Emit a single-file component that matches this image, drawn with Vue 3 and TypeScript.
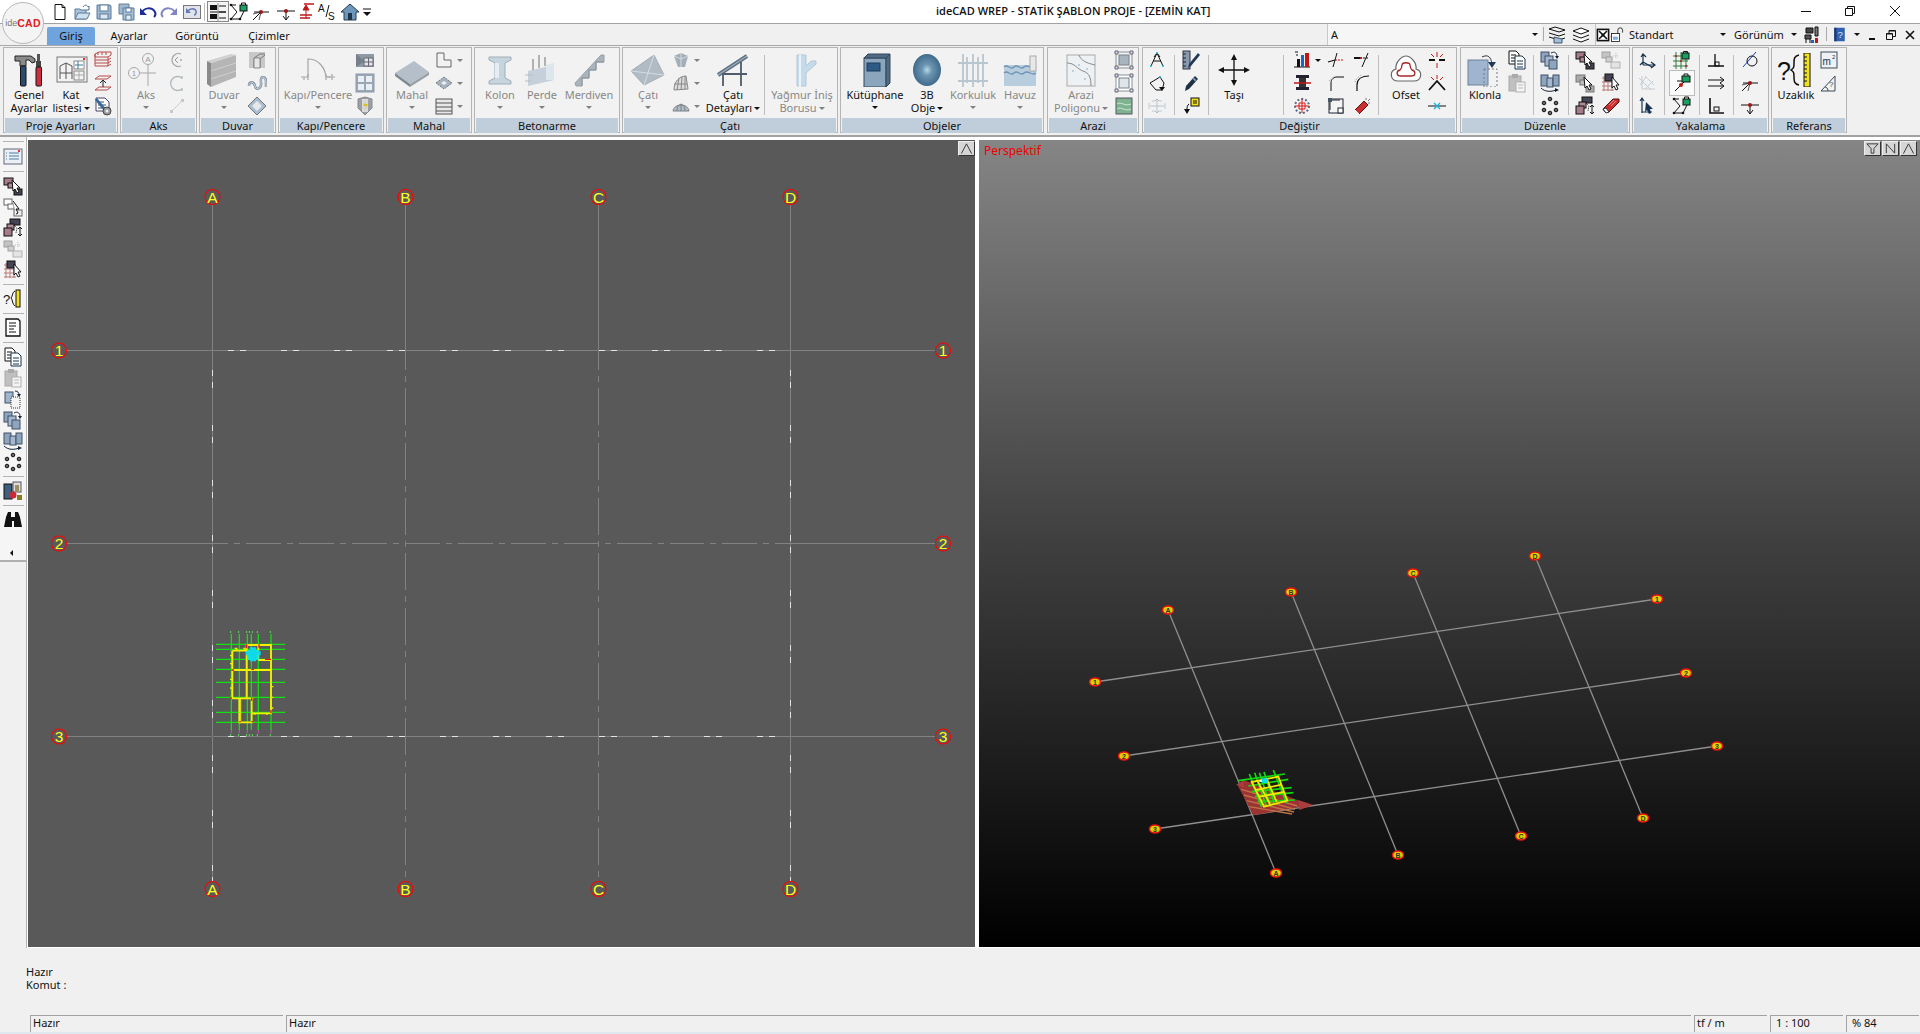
<template>
  <div class="app">
    <header class="titlebar">
      <div class="logo"><span class="logo-ide">ide</span><span class="logo-cad">CAD</span></div>
      <div class="quick">
        <span v-for="q in quickIcons" :key="q.n" class="quick-item" :class="{ boxed: q.boxed }" :style="{ left: q.x - 11 + 'px' }">
          <svg class="ico" viewBox="0 0 20 20" v-html="icons[q.n]"></svg>
        </span>
        <span class="quick-sep"></span>
      </div>
      <div class="title">ideCAD WREP - STATİK ŞABLON PROJE - [ZEMİN KAT]</div>
      <div class="win-buttons">
        <svg viewBox="0 0 12 12" class="win"><path d="M1 6.500h10" stroke="#111" fill="none" /></svg>
        <svg viewBox="0 0 12 12" class="win"><path d="M1.500 3.500h7v7h-7zM3.500 3.500v-2h7v7h-2" stroke="#111" fill="none" /></svg>
        <svg viewBox="0 0 12 12" class="win"><path d="M1 1l10 10M11 1L1 11" stroke="#111" fill="none" /></svg>
      </div>
    </header>

    <nav class="tabbar">
      <div class="tabs">
        <span class="tab active">Giriş</span>
        <span class="tab t-ayar">Ayarlar</span>
        <span class="tab t-gor">Görüntü</span>
        <span class="tab t-ciz">Çizimler</span>
      </div>
      <div class="combo combo-a"><span>A</span><i class="caret dark"></i></div>
      <div class="bar-sep"></div>
      <svg class="ico layer1" viewBox="0 0 20 20" v-html="icons.layerA"></svg>
      <svg class="ico layer2" viewBox="0 0 20 20" v-html="icons.layerB"></svg>
      <div class="bar-line"></div>
      <svg class="ico check" viewBox="0 0 20 20" v-html="icons.checkX"></svg>
      <svg class="ico lockw" viewBox="0 0 20 20" v-html="icons.lockWin"></svg>
      <div class="combo combo-std"><span>Standart</span><i class="caret dark"></i></div>
      <div class="combo-view"><span>Görünüm</span><i class="caret dark"></i></div>
      <svg class="ico person" viewBox="0 0 20 20" v-html="icons.person"></svg>
      <div class="bar-sep s2"></div>
      <svg class="ico helpb" viewBox="0 0 20 20" v-html="icons.helpBook"></svg>
      <i class="caret dark help-caret"></i>
      <div class="mdi">
        <svg viewBox="0 0 12 12" class="mdi-b"><path d="M3 10h6" stroke="#111" stroke-width="2" /></svg>
        <svg viewBox="0 0 12 12" class="mdi-b"><path d="M1.500 4.500h6v6h-6zM4 4.500v-3h6.500v6h-3M1.500 5h6M4 2h6.500" stroke="#111" fill="none" /></svg>
        <svg viewBox="0 0 12 12" class="mdi-b"><path d="M2 2l8 8M10 2l-8 8" stroke="#111" stroke-width="1.600" fill="none" /></svg>
      </div>
    </nav>

    <section class="ribbon">
      <div v-for="g in groups" :key="g.name" class="group" :style="{ width: g.x1 - g.x0 + 'px', marginLeft: g.gap + 'px' }">
        <div class="group-body">
          <template v-for="(c, i) in g.cols" :key="i">
            <div v-if="c.kind === 'sep'" class="col-sep" :style="{ marginLeft: c.ml + 'px' }"></div>
            <div v-else-if="c.kind === 'small'" class="col-small" :style="{ marginLeft: c.ml + 'px' }">
              <div v-for="(it, j) in c.items" :key="j" class="small-item" :class="{ boxed: it.boxed }">
                <svg v-if="it.n" class="ico" viewBox="0 0 20 20" v-html="icons[it.n]"></svg>
                <i v-if="it.caret" class="caret side" :class="{ dark: it.caret === 2 }"></i>
              </div>
            </div>
            <div v-else class="col-big" :class="{ dim: c.dim }" :style="{ width: c.w + 'px', marginLeft: c.ml + 'px' }">
              <svg class="ico-big" viewBox="0 0 36 34" v-html="icons[c.n]"></svg>
              <span v-for="(l, k) in c.label" :key="k" class="big-label">{{ l }}<i v-if="c.inline && k === c.label.length - 1" class="caret inline"></i></span>
              <i v-if="c.under" class="caret under"></i>
            </div>
          </template>
        </div>
        <div class="caption">{{ g.name }}</div>
      </div>
    </section>

    <main class="work">
      <aside class="sidebar">
        <div class="side-tools">
          <div class="side-sep first"></div>
          <template v-for="(s, i) in sideIcons" :key="i">
            <div v-if="s === '-'" class="side-sep"></div>
            <svg v-else class="ico side-ico" viewBox="0 0 20 20" v-html="icons[s]"></svg>
          </template>
          <i class="side-arrow"></i>
        </div>
      </aside>

      <div class="viewports">
        <div class="view plan">
          <svg class="canvas" viewBox="28 140 947 807">
            <g stroke="#828282" stroke-width="1" fill="none">
              <path v-for="x in planX" :key="x.t" :d="`M${x.x + 0.5} 205V881`" />
              <path v-for="y in planY" :key="y.t" :d="`M67 ${y.y + 0.5}H935`" />
            </g>
            <g>
              <rect v-for="(d, i) in hDashes" :key="'h' + i" :x="d.x" :y="d.y" width="6" height="1" :fill="d.c" />
              <rect v-for="(d, i) in vDashes" :key="'v' + i" :x="d.x" :y="d.y" width="1" height="6" :fill="d.c" />
            </g>
            <g v-for="m in planMarks" :key="m.k">
              <circle :cx="m.x" :cy="m.y" r="7.500" fill="#595959" stroke="#ff0000" stroke-width="1.100" />
              <text :x="m.x" :y="m.y + 5.500" class="axis-text">{{ m.t }}</text>
            </g>
            <g transform="translate(190 620) scale(.3333)">
              <g stroke="#12e012" stroke-width="3.800" fill="none">
                <path v-for="y in [73, 88, 118, 148, 187, 232, 277, 307]" :key="y" :d="`M78 ${y}H286`" />
                <path v-for="x in [124, 148, 172, 184, 205, 243]" :key="x" :d="`M${x} 42V330`" />
              </g>
              <g stroke="#5be05b" stroke-width="3" fill="none">
                <path v-for="x in [122, 146, 170, 178, 187, 202, 241]" :key="x" :d="`M${x} 33v6M${x} 342v6`" />
              </g>
              <path d="M124 330v10M148 330v10M172 330v10M205 330v10M243 330v10" stroke="#c050b0" stroke-width="3.500" fill="none" />
              <path d="M127 92H170M170 92V75H243V120H205M205 75V120M127 92V235H170M127 150H243M170 92V235M243 120V280H185M148 235V307H185V235M170 235H190" stroke="#f6f000" stroke-width="5.500" fill="none" />
              <path d="M152 235V304" stroke="#f6f000" stroke-width="3" fill="none" />
              <path d="M172 90h34v30h-34z" fill="#00e8e8" />
              <path d="M180 82h18v42h-18zM168 94h44v12h-44z" fill="#0fd8e8" />
              <path d="M170 73v12M207 73v10M124 150h8M243 118h-18M123 232v6M184 148h8M185 232v10M243 270v10M148 305h4M184 305h4" stroke="#e01010" stroke-width="4" fill="none" />
              <path d="M120 107h6M120 131h6M120 178h6M120 204h6M134 85h6v7M160 85h5v7M246 200h4M246 232h4M246 264h4M192 282h5M228 282h5" stroke="#f6f000" stroke-width="4" fill="none" />
              <rect x="63" y="345" width="8" height="8" fill="#6a6a80" />
            </g>
          </svg>
          <button class="vbtn one"><svg viewBox="0 0 16 14"><path d="M8 2L2.500 12.500M8 2l5.500 10.500" stroke="#333" fill="none" /></svg></button>
        </div>

        <div class="view persp">
          <svg class="canvas" viewBox="979 140 941 807">
            <g stroke="#8f8f8f" stroke-width="1.300" fill="none">
              <path v-for="l in perspLines" :key="l.a" :d="`M${l.x1} ${l.y1}L${l.x2} ${l.y2}`" />
            </g>
            <g transform="translate(1220 750) scale(.3333)">
              <path d="M52 104L70 90L232 150L272 165L100 196Z" fill="#9c3434" />
              <path d="M48 104L70 94L72 112ZM235 150L280 165L238 180Z" fill="#ac3c3c" />
              <path d="M64 118L232 168M72 135L225 178M80 152L222 186M88 170L216 192" stroke="#c07048" stroke-width="4" fill="none" />
              <g stroke="#12d812" stroke-width="5" fill="none">
                <path d="M55 92L195 72M85 108L205 88M95 125L215 113M105 140L220 128M112 155L225 150" />
                <path d="M88 72L125 172M104 68L140 170M118 68L152 168M132 66L165 165M160 60L200 160" />
              </g>
              <path d="M95 96L175 80L202 152L132 170ZM112 92L150 162M140 86L170 156M108 120L185 104M118 140L192 126" stroke="#f2e800" stroke-width="5.500" fill="none" />
              <path d="M125 85h18v14h-18z" fill="#00e0e8" />
              <path d="M118 90h8v6h-8z" fill="#d8f0f0" />
            </g>
            <g v-for="m in perspMarks" :key="m.k">
              <ellipse :cx="m.x" :cy="m.y" rx="5.500" ry="4" fill="#e0d000" stroke="#e81010" stroke-width="1.500" />
              <text :x="m.x" :y="m.y + 2.500" class="mini-text">{{ m.t }}</text>
            </g>
          </svg>
          <span class="persp-label">Perspektif</span>
          <div class="vbtn-row">
            <button class="vbtn"><svg viewBox="0 0 16 14"><path d="M2 2h12L9.500 7v5h-3V7z" stroke="#333" fill="none" /></svg></button>
            <button class="vbtn"><svg viewBox="0 0 16 14"><path d="M3.500 12V2L12.500 12V2" stroke="#333" fill="none" /></svg></button>
            <button class="vbtn"><svg viewBox="0 0 16 14"><path d="M8 2L2.500 12.500M8 2l5.500 10.500" stroke="#333" fill="none" /></svg></button>
          </div>
        </div>
      </div>
    </main>

    <section class="messages">
      <div>Hazır</div>
      <div>Komut :</div>
    </section>

    <footer class="status">
      <div class="cell c1">Hazır</div>
      <div class="cell c2">Hazır</div>
      <div class="cell c3">tf / m</div>
      <div class="cell c4">1 : 100</div>
      <div class="cell c5">% 84</div>
    </footer>
  </div>
</template>

<script setup lang="ts">
interface Item {
  n?: string
  caret?: number
  boxed?: boolean
}
interface Col {
  kind: 'big' | 'small' | 'sep'
  c: number
  n?: string
  label?: string[]
  dim?: boolean
  under?: boolean
  inline?: boolean
  w?: number
  ml?: number
  items?: Item[]
}

const big = (c: number, n: string, label: string[], opts: Partial<Col> = {}): Col => ({ kind: 'big', c, n, label, ...opts })
const small = (c: number, ...names: (string | Item)[]): Col => ({
  kind: 'small',
  c,
  items: names.map((x) => (typeof x === 'string' ? { n: x } : x)),
})
const sep = (c: number): Col => ({ kind: 'sep', c })

const raw = [
  { name: 'Proje Ayarları', x0: 3, x1: 118, cols: [
    big(29, 'hammer', ['Genel', 'Ayarlar']),
    big(71, 'kat', ['Kat', 'listesi'], { inline: true }),
    small(103, 'redStack', 'redPlanes', 'docGear'),
  ] },
  { name: 'Aks', x0: 120, x1: 197, cols: [
    big(146, 'aks', ['Aks'], { dim: true, under: true }),
    small(177, 'dimCircle', 'dimArc', 'dimLine'),
  ] },
  { name: 'Duvar', x0: 199, x1: 276, cols: [
    big(224, 'duvar', ['Duvar'], { dim: true, under: true }),
    small(257, 'wallCorner', 'wave', 'diamond'),
  ] },
  { name: 'Kapı/Pencere', x0: 278, x1: 384, cols: [
    big(318, 'kapi', ['Kapı/Pencere'], { dim: true, under: true, w: 72 }),
    small(365, 'winDark', 'winGrid', 'shield'),
  ] },
  { name: 'Mahal', x0: 386, x1: 472, cols: [
    big(412, 'mahal', ['Mahal'], { dim: true, under: true }),
    small(444, { n: 'lShape', caret: 1 }, { n: 'smallDiamond', caret: 1 }, { n: 'hatchBox', caret: 1 }),
  ] },
  { name: 'Betonarme', x0: 474, x1: 620, cols: [
    big(500, 'kolon', ['Kolon'], { dim: true, under: true }),
    big(542, 'perde', ['Perde'], { dim: true, under: true }),
    big(589, 'merdiven', ['Merdiven'], { dim: true, under: true }),
  ] },
  { name: 'Çatı', x0: 622, x1: 838, cols: [
    big(648, 'cati', ['Çatı'], { dim: true, under: true }),
    small(681, { n: 'roofCone', caret: 1 }, { n: 'roofHatch', caret: 1 }, { n: 'dome', caret: 1 }),
    big(733, 'catiDetay', ['Çatı', 'Detayları'], { inline: true, w: 60 }),
    sep(764),
    big(802, 'yagmur', ['Yağmur İniş', 'Borusu'], { dim: true, inline: true, w: 66 }),
  ] },
  { name: 'Objeler', x0: 840, x1: 1044, cols: [
    big(875, 'kutuphane', ['Kütüphane'], { under: true, w: 60 }),
    big(927, 'sphere', ['3B', 'Obje'], { inline: true }),
    big(973, 'korkuluk', ['Korkuluk'], { dim: true, under: true }),
    big(1020, 'havuz', ['Havuz'], { dim: true, under: true }),
  ] },
  { name: 'Arazi', x0: 1047, x1: 1139, cols: [
    big(1081, 'arazi', ['Arazi', 'Poligonu'], { dim: true, inline: true, w: 60 }),
    small(1124, 'boxA', 'boxB', 'boxC'),
  ] },
  { name: 'Değiştir', x0: 1142, x1: 1457, cols: [
    small(1157, 'triDots', 'loopArrow', 'dimMove'),
    sep(1174),
    small(1191, 'rulerPen', 'pen', 'arrowNote'),
    sep(1208),
    big(1234, 'tasi', ['Taşı']),
    sep(1283),
    small(1302, { n: 'bars', caret: 2 }, 'beam', 'target'),
    small(1336, 'lineRed', 'cornerDash', 'boxNodes'),
    small(1362, 'lineSlash', 'curveCorner', 'brush'),
    sep(1378),
    big(1406, 'ofset', ['Ofset']),
    small(1437, 'redCross', 'xCross', 'cyanCross'),
  ] },
  { name: 'Düzenle', x0: 1460, x1: 1630, cols: [
    big(1485, 'klonla', ['Klonla']),
    small(1517, 'copy', 'pasteDim', {}),
    sep(1533),
    small(1550, 'stackArrow', 'rectsArrow', 'dotRing'),
    sep(1568),
    small(1585, 'pinkCursor', 'grayCursor', 'rotateStack'),
    small(1611, 'dimRects', 'gridCursor', 'eraser'),
  ] },
  { name: 'Yakalama', x0: 1632, x1: 1769, cols: [
    small(1647, 'cornerArrow', 'dimGrid', 'cursorArrow'),
    sep(1664),
    small(1682, 'gridLock', { n: 'pointLock', boxed: true }, 'zigLock'),
    sep(1699),
    small(1716, 'perp', 'parallel', 'lCorner'),
    sep(1733),
    small(1750, 'lineCircle', 'dotLine', 'dotCross'),
  ] },
  { name: 'Referans', x0: 1771, x1: 1847, cols: [
    big(1796, 'uzaklik', ['Uzaklık']),
    small(1829, 'm2', 'angle', {}),
  ] },
]

const groups = raw.map((g, gi) => {
  let cur = g.x0
  const cols = g.cols.map((c) => {
    const w = c.kind === 'sep' ? 1 : c.kind === 'small' ? 20 : c.w ?? 46
    const ml = c.c - w / 2 - cur
    cur = c.c + w / 2
    return { ...c, w, ml }
  })
  return { ...g, cols, gap: gi === 0 ? g.x0 : g.x0 - raw[gi - 1].x1 }
})

const quickIcons = [
  { n: 'qNew', x: 60 }, { n: 'qOpen', x: 82 }, { n: 'qSave', x: 104 }, { n: 'qSaveAll', x: 127 },
  { n: 'qUndo', x: 148 }, { n: 'qRedo', x: 169 }, { n: 'qUndoBox', x: 192 },
  { n: 'qList', x: 218, boxed: true }, { n: 'zigLock', x: 239 }, { n: 'dotLine', x: 261 }, { n: 'dotCross', x: 286 },
  { n: 'qRedUp', x: 307 }, { n: 'qAs', x: 327 }, { n: 'qHome', x: 350 }, { n: 'qMore', x: 367 },
]

const sideIcons = [
  'qPanel', '-', 'pinkCursor', 'grayOutline', 'rotateStack', 'dimRects', 'gridCursor', '-',
  'sideUzak', '-', 'sideDoc', '-', 'copy', 'pasteDim', 'sideClone', 'stackArrow', 'rectsArrow', 'dotRing', '-',
  'sideObj', '-', 'binoc',
]

// kat plani: aks cizgileri ve kesikli parcalar
const planX = [{ t: 'A', x: 212 }, { t: 'B', x: 405 }, { t: 'C', x: 598 }, { t: 'D', x: 790 }]
const planY = [{ t: '1', y: 350 }, { t: '2', y: 543 }, { t: '3', y: 736 }]
const white = '#e4e4e4'
const bg = '#595959'

const hDashes: { x: number; y: number; c: string }[] = []
for (const [y, c] of [[350, white], [543, bg], [736, white]] as [number, string][]) {
  for (let i = -3; i <= 7; i++) {
    const x = Math.round(387 + i * 52.9)
    hDashes.push({ x, y, c }, { x: x + 12, y, c })
  }
}
const vDashes: { x: number; y: number; c: string }[] = []
for (const [x, c] of [[212, white], [405, bg], [598, bg], [790, white]] as [number, string][]) {
  for (let i = 0; i <= 9; i++) {
    const y = 370 + i * 55
    vDashes.push({ x, y, c }, { x, y: y + 12, c })
  }
}

const planMarks = [
  ...planX.flatMap((a) => [{ k: a.t + 't', t: a.t, x: a.x + 0.5, y: 197 }, { k: a.t + 'b', t: a.t, x: a.x + 0.5, y: 889 }]),
  ...planY.flatMap((a) => [{ k: a.t + 'l', t: a.t, x: 59, y: a.y + 0.5 }, { k: a.t + 'r', t: a.t, x: 943, y: a.y + 0.5 }]),
]

const perspLines = [
  { a: 'A', t: [1168, 610], b: [1276, 873] },
  { a: 'B', t: [1291, 592], b: [1398, 855] },
  { a: 'C', t: [1413, 573], b: [1521, 836] },
  { a: '4', t: [1535, 556], b: [1643, 818] },
  { a: '1', t: [1095, 682], b: [1657, 599] },
  { a: '2', t: [1124, 756], b: [1686, 673] },
  { a: '3', t: [1155, 829], b: [1717, 746] },
].map((l) => ({ a: l.a, x1: l.t[0], y1: l.t[1], x2: l.b[0], y2: l.b[1] }))

const perspMarks = [
  { k: 'at', t: 'A', x: 1168, y: 610 }, { k: 'ab', t: 'A', x: 1276, y: 873 },
  { k: 'bt', t: 'B', x: 1291, y: 592 }, { k: 'bb', t: 'B', x: 1398, y: 855 },
  { k: 'ct', t: 'C', x: 1413, y: 573 }, { k: 'cb', t: 'C', x: 1521, y: 836 },
  { k: 'dt', t: 'D', x: 1535, y: 556 }, { k: 'db', t: 'D', x: 1643, y: 818 },
  { k: '1l', t: '1', x: 1095, y: 682 }, { k: '1r', t: '1', x: 1657, y: 599 },
  { k: '2l', t: '2', x: 1124, y: 756 }, { k: '2r', t: '2', x: 1686, y: 673 },
  { k: '3l', t: '3', x: 1155, y: 829 }, { k: '3r', t: '3', x: 1717, y: 746 },
]

const K = 'stroke="#111" fill="none"'
const icons: Record<string, string> = {
  // quick access
  qNew: `<path d="M5 2.500h7l3 3v12H5z" fill="#fff" stroke="#111"/><path d="M12 2.500v3h3" ${K}/>`,
  qOpen: `<path d="M3 17V7h5l1 1h5v9z" fill="#a9c3da" stroke="#5a7a99"/><path d="M3 17l3-6h12l-3 6z" fill="#cfe0ee" stroke="#5a7a99"/><path d="M11 5c2-3 4-2 5 0l1-1v4h-3" fill="none" stroke="#4a6f95"/>`,
  qSave: `<path d="M3 3h13l1 1v13H3z" fill="#9db8d0" stroke="#5d7d9c"/><rect x="6" y="3" width="8" height="6" fill="#fff" stroke="#5d7d9c"/><rect x="6" y="12" width="8" height="5" fill="#dfe8f0" stroke="#5d7d9c"/>`,
  qSaveAll: `<path d="M2 2h10v10H2z" fill="#9db8d0" stroke="#6a7f95"/><path d="M6 6h11v12H6z" fill="#a8bfd3" stroke="#5d7d9c"/><rect x="9" y="6" width="5" height="4" fill="#fff" stroke="#5d7d9c"/><rect x="9" y="13" width="5" height="5" fill="#e6edf3" stroke="#5d7d9c"/>`,
  qUndo: `<path d="M4 11c2-6 10-6 13-1 1 2 0 4-1 5" fill="none" stroke="#1a2f9c" stroke-width="2"/><path d="M2 6v7h7z" fill="#1a2f9c"/>`,
  qRedo: `<path d="M16 11c-2-6-10-6-13-1-1 2 0 4 1 5" fill="none" stroke="#7f86c0" stroke-width="2"/><path d="M18 6v7h-7z" fill="#7f86c0"/>`,
  qUndoBox: `<rect x="1.500" y="3.500" width="17" height="13" fill="#dfe4ea" stroke="#777"/><path d="M6 9c2-3 7-3 8 0 1 2-1 4-2 4" fill="none" stroke="#6678b0" stroke-width="1.500"/><path d="M4 6v5h5z" fill="#6678b0"/>`,
  qList: `<rect x="2" y="3" width="7" height="5" fill="#111"/><rect x="2" y="12" width="7" height="5" fill="#111"/><path d="M11 4h7M11 10h7M11 16h7M2 10h16" stroke="#111"/><path d="M10 1v18" stroke="#888"/>`,
  qRedUp: `<path d="M9 17V5M9 3L6 8h6z" fill="#c01818" stroke="#c01818"/><path d="M3 13h12M3 16h10M7 2h10" stroke="#c01818" fill="none" stroke-width="1.500"/>`,
  qAs: `<text x="1" y="10" font-size="10" font-family="Liberation Sans" fill="#111">A</text><path d="M9 15l3-12" stroke="#111"/><text x="11" y="18" font-size="10" font-family="Liberation Sans" fill="#111">S</text>`,
  qHome: `<path d="M10 2L1 10h3v8h12v-8h3z" fill="#6d96bd" stroke="#24384d"/><rect x="8" y="11" width="4" height="7" fill="#1f3347"/>`,
  qMore: `<path d="M6 7h8" stroke="#111"/><path d="M6 10h8l-4 4z" fill="#111"/>`,
  // tab bar
  layerA: `<path d="M2 4l6-2 10 3-6 2zM2 8l10 3 6-2M2 12l10 3 6-2" fill="none" stroke="#111"/><path d="M7 12l8 2v4H7z" fill="#9ec0de" stroke="#456"/>`,
  layerB: `<path d="M2 6l8-3 8 3-8 3zM2 10l8 3 8-3M2 14l8 3 8-3" fill="#fff" stroke="#111"/>`,
  checkX: `<rect x="3" y="3" width="14" height="14" fill="#fff" stroke="#111" stroke-width="2"/><path d="M5 5l10 10M15 5L5 15" stroke="#111" stroke-width="2"/><circle cx="10" cy="10" r="2" fill="#111"/>`,
  lockWin: `<rect x="3" y="8" width="10" height="10" fill="#fff" stroke="#111"/><path d="M5 12h6v4H5z" fill="#7fb0e0"/><path d="M11 8V4a3 3 0 016 0v3" fill="none" stroke="#111"/><path d="M2 12h2" stroke="#c22"/>`,
  person: `<path d="M4 3h7v5H4z" fill="#444" stroke="#111"/><path d="M13 2v9h3V2z" fill="#777" stroke="#111"/><path d="M3 10h6v4H3zM4 14v4M8 14v4" stroke="#111" fill="#555"/><rect x="13" y="13" width="3" height="5" fill="#c01818"/><rect x="9" y="15" width="3" height="3" fill="#1c64c8"/>`,
  helpBook: `<rect x="3" y="1" width="14" height="18" fill="#2f62b0"/><rect x="3" y="1" width="3" height="18" fill="#1b3a72"/><text x="11" y="15" font-size="13" text-anchor="middle" font-family="Liberation Sans" fill="#dbe8ff">?</text>`,
  // proje
  hammer: `<path d="M4 3h16l4 3v3l-3 1-3-3h-3v6H9V8H4z" fill="#8a8a8a" stroke="#222"/><rect x="9.500" y="13" width="5.500" height="20" rx="1" fill="#2b4c70" stroke="#111"/><path d="M27.500 1v13" stroke="#555" stroke-width="3"/><path d="M25 8h5v6h-5z" fill="#444"/><rect x="25" y="14" width="5.500" height="19" rx="1" fill="#cc3040" stroke="#111"/>`,
  kat: `<rect x="4" y="4" width="30" height="25" fill="#f2f2f2" stroke="#777"/><rect x="30" y="5" width="2" height="2" fill="#d33"/><path d="M7 26V13l6-3 6 3v13M7 20h12M13 10v16" fill="none" stroke="#555"/><rect x="21" y="8" width="10" height="8" fill="#fff" stroke="#888"/><path d="M25 8v8M22 12h8" stroke="#3c7a95"/><rect x="21" y="18" width="10" height="9" fill="none" stroke="#888"/><path d="M21 22h10M26 18v9" stroke="#aaa"/>`,
  redStack: `<path d="M2 4l4-2h12v3l-3 2H2zM2 10h13l3-2M2 13h13l3-2M2 16h13l3-2M2 4v12M15 7v9" fill="none" stroke="#b84a4a"/><path d="M5 2v3M9 2v3M13 2v3" stroke="#b84a4a"/>`,
  redPlanes: `<path d="M2 6l4-3h12l-4 3zM2 17l4-3h12l-4 3z" fill="none" stroke="#b84a4a"/><path d="M10 8v6M7 10l3-3 3 3" fill="none" stroke="#222"/>`,
  docGear: `<path d="M3 2h9l4 4v9H3z" fill="#fff" stroke="#446"/><path d="M5 6h6M5 9h8M5 12h5" stroke="#446"/><path d="M2 4l9 11 3-1-10-12z" fill="#356a9b"/><circle cx="14" cy="15" r="4" fill="#999" stroke="#444"/><circle cx="14" cy="15" r="1.500" fill="#eee"/>`,
  // aks
  aks: `<g fill="none" stroke="#a8a8a8"><circle cx="20" cy="6" r="5.500"/><circle cx="6" cy="20" r="5.500"/><path d="M20 12v21M12 20h16"/></g><text x="20" y="9" font-size="8" text-anchor="middle" font-family="Liberation Sans" fill="#999">A</text><text x="6" y="23" font-size="8" text-anchor="middle" font-family="Liberation Sans" fill="#999">1</text>`,
  dimCircle: `<path d="M14 4a6.500 6.500 0 100 12" fill="none" stroke="#b0b0b0" stroke-width="1.300"/><path d="M11 7l-3 3 3 3" fill="none" stroke="#999"/><circle cx="14" cy="10" r="1" fill="#aaa"/>`,
  dimArc: `<path d="M15 5a7 7 0 100 11" fill="none" stroke="#aeb8c0" stroke-width="1.300"/><path d="M15 3v3M15 15v3" stroke="#aaa"/>`,
  dimLine: `<path d="M4 16L16 4" stroke="#bbb" stroke-dasharray="2 1"/><rect x="3" y="14" width="3" height="3" fill="#c8c8c8"/><rect x="14" y="3" width="3" height="3" fill="#c8c8c8"/>`,
  // duvar
  duvar: `<path d="M5 10L30 2v22L5 34z" fill="#b5b5b5"/><path d="M5 10L30 2 25 1 1 8z" fill="#d0d0d0"/><path d="M1 8l4 2v24l-4-3z" fill="#8a8a8a"/><path d="M5 18l25-8M5 26l25-8" stroke="#cfcfcf"/>`,
  wallCorner: `<path d="M2 2h16v16H2z" fill="#c8c8c8"/><path d="M7 18V8l6-4h5M13 18V9l5-4" fill="none" stroke="#777"/><path d="M7 8h6v10H7z" fill="#e6e6e6" stroke="#888"/>`,
  wave: `<path d="M2 13c0-5 5-5 6 0s7 3 6-4 5-6 5 0v5" fill="none" stroke="#7a8da0" stroke-width="2.500"/><path d="M2 13c0-5 5-5 6 0s7 3 6-4 5-6 5 0v5" fill="none" stroke="#e8e8e8" stroke-width=".8"/>`,
  diamond: `<path d="M10 1l9 9-9 9-9-9z" fill="#a8bdd0" stroke="#777"/><path d="M10 5l5 5-5 5-5-5z" fill="#e8e8e8"/>`,
  // kapi
  kapi: `<g fill="none" stroke="#a6a6a6" stroke-width="1.200"><path d="M8 24V6c10 0 17 8 18 18"/><path d="M1 24h7M26 24h9M8 21v6M26 21v6M4 24v3M32 21v6"/></g><path d="M27 23h6v2h-6z" fill="#bbb"/>`,
  winDark: `<rect x="1" y="4" width="18" height="13" fill="#8f9aa5"/><path d="M1 4l9 7-9 6z" fill="#75808b"/><rect x="9" y="8" width="9" height="8" fill="#e4e4e4" stroke="#667"/><path d="M13.500 8v8M9 12h9" stroke="#667"/>`,
  winGrid: `<rect x="1" y="1" width="18" height="18" fill="#9aa8b5" stroke="#8c9aa8"/><rect x="3" y="3" width="6" height="6" fill="#e8eef3"/><rect x="11" y="3" width="6" height="6" fill="#e8eef3"/><rect x="3" y="11" width="6" height="6" fill="#e8eef3"/><rect x="11" y="11" width="6" height="6" fill="#e8eef3"/>`,
  shield: `<path d="M3 3l7-2 7 2v9l-7 7-7-7z" fill="#9aa0a6" stroke="#888"/><path d="M7 3h6v13H7z" fill="#d8d8d8"/><path d="M11 5l-3 5h3l-2 5 4-7h-3z" fill="#d8c020"/>`,
  // mahal
  mahal: `<path d="M1 20l19-12 15 11-19 12z" fill="#b5bfc9"/><path d="M1 20l15 11v3L1 23z" fill="#808890"/><path d="M16 31l19-12v3L16 34z" fill="#9aa2aa"/>`,
  lShape: `<path d="M3 3h7v7h7v7H3z" fill="#f2f2f2" stroke="#666"/>`,
  smallDiamond: `<path d="M2 10l8-6 8 6-8 6z" fill="#a5b2bf" stroke="#777" stroke-dasharray="2 1"/><path d="M7 10l3-2 3 2-3 2z" fill="#eee"/>`,
  hatchBox: `<rect x="2" y="3" width="16" height="15" fill="#e8e8e8" stroke="#555"/><path d="M2 7h16M2 11h16M2 15h16" stroke="#555"/>`,
  // betonarme
  kolon: `<path d="M7 4h22v3l-6 3v15l6 3v3H7v-3l6-3V10l-6-3z" fill="#c6d4de" stroke="#a0aeb8"/><path d="M13 10h4v15h-4z" fill="#e6eef3"/>`,
  perde: `<path d="M4 18l26-6v15L4 33z" fill="#c5d0da"/><path d="M22 12l8-2v17h-8z" fill="#dde6ed"/><path d="M9 17V6M15 15V2M21 13V4" stroke="#8e8e8e" stroke-width="1.300" fill="none"/><path d="M1 22h8M1 28h6" stroke="#bbb"/>`,
  merdiven: `<path d="M5 33h6v-8h7v-8h7V9h8V2h-3L4 30z" fill="#aab4bd" stroke="#98a2aa"/><path d="M11 33V25h7v-8h7V9h8" fill="none" stroke="#8a949c"/>`,
  // cati
  cati: `<path d="M1 18L24 2l10 20-20 10z" fill="#b0bbc4" stroke="#a5aeb6"/><path d="M1 18l33 4M24 2L14 32" stroke="#d5dde3" fill="none"/>`,
  roofCone: `<path d="M3 6l7-3 7 3-3 11H7z" fill="#a3aeb8"/><path d="M10 3v14M3 6l7 3 7-3" fill="none" stroke="#d5dbe0"/>`,
  roofHatch: `<path d="M3 17c0-8 5-14 12-14l2 13z" fill="#dcdcdc" stroke="#888"/><path d="M6 17l2-12M10 17l1-13M14 16V3M3 11h13" stroke="#888" fill="none"/>`,
  dome: `<path d="M2 15c1-8 15-8 16 0z" fill="#b4bcc3" stroke="#7a8288"/><path d="M6 15c0-3 1-6 4-7 3 1 4 4 4 7M10 8v7" fill="none" stroke="#7a8288"/>`,
  catiDetay: `<path d="M3 22L32 3" stroke="#5d6f80" stroke-width="4"/><path d="M3 22L32 3" stroke="#9fb0bf" stroke-width="1.200"/><path d="M8 20v13M26 9v24M8 21h24" stroke="#4d5d6c" stroke-width="1.800"/>`,
  yagmur: `<path d="M13 2h9v11l5-5h5v3l-10 9v13h-9z" fill="#c6dbea" stroke="#b3c7d6"/><path d="M16 2v32" stroke="#eaf3f9" stroke-width="2"/>`,
  // objeler
  kutuphane: `<rect x="7" y="5" width="22" height="29" fill="#8aa5bc" stroke="#33485c"/><path d="M7 5l4-4h22l-4 4zM29 5l4-4v29l-4 4z" fill="#4f6a82" stroke="#33485c"/><rect x="10" y="10" width="13" height="8" fill="#2f5a85" stroke="#1d3c5c"/>`,
  sphere: `<defs><radialGradient id="sph"><stop offset="0" stop-color="#b8d8e8"/><stop offset=".35" stop-color="#6d96b2"/><stop offset="1" stop-color="#3f6a8a"/></radialGradient></defs><ellipse cx="18" cy="17" rx="14" ry="16" fill="url(#sph)"/>`,
  korkuluk: `<g stroke="#b8c6d0" stroke-width="1.800" fill="none"><path d="M8 1v33M18 1v33M28 1v33M12 4v26M23 4v26M3 10h30M3 28h30"/></g>`,
  havuz: `<path d="M2 12h32v21H2z" fill="#b8cedf"/><path d="M2 14c4-4 6 4 10 0s6 4 10 0 8 4 12 0M2 20c4-4 6 4 10 0s6 4 10 0 8 4 12 0" fill="none" stroke="#6f94b4" stroke-width="1.300"/><rect x="28" y="3" width="6" height="15" fill="#e8e8e8" stroke="#aaa"/>`,
  // arazi
  arazi: `<rect x="4" y="2" width="28" height="31" fill="#eef1f3" stroke="#aaa"/><path d="M4 10c8 0 10 6 16 8s8 6 8 15M16 2c2 6 8 8 16 10" fill="none" stroke="#8a8a8a"/><g fill="#a8c4d8"><circle cx="16" cy="12" r="1"/><circle cx="24" cy="16" r="1"/><circle cx="10" cy="18" r="1"/><circle cx="22" cy="26" r="1"/></g>`,
  boxA: `<rect x="2" y="2" width="16" height="16" fill="none" stroke="#8a9299"/><rect x="5" y="5" width="10" height="10" fill="#a9b5be" stroke="#76818a"/><path d="M1 1h3v3H1zM16 1h3v3h-3zM1 16h3v3H1zM16 16h3v3h-3z" fill="#dde" stroke="#667"/>`,
  boxB: `<rect x="2" y="2" width="16" height="16" fill="#fff" stroke="#8a9299"/><rect x="5" y="5" width="10" height="10" fill="#dfe6ea" stroke="#76818a"/><path d="M1 1h3v3H1zM16 1h3v3h-3zM1 16h3v3H1zM16 16h3v3h-3z" fill="#dde" stroke="#667"/>`,
  boxC: `<rect x="2" y="2" width="16" height="16" fill="#7fb38f" stroke="#556"/><path d="M3 8c4-3 8 3 14 0M3 13c4-3 8 3 14 0" fill="none" stroke="#cfe8d6"/>`,
  // degistir
  triDots: `<path d="M10 3L4 16M10 3l6 13M6 11h8" ${K}/><path d="M7 7l3-4 3 4" fill="none" stroke="#111"/><circle cx="10" cy="3" r="1" fill="#19b5d8"/><circle cx="4" cy="16" r="1" fill="#19b5d8"/><circle cx="16" cy="16" r="1" fill="#19b5d8"/>`,
  loopArrow: `<path d="M13 4L3 10l6 7h6l2-7z" ${K}/><circle cx="13" cy="4" r="1" fill="#19b5d8"/><path d="M12 14l3 4 3-4z" fill="#111"/>`,
  dimMove: `<path d="M10 3v14M3 10h14" stroke="#b8c2cc"/><path d="M5 5h3M12 5h3M5 15h3M12 15h3M2 7v6M18 7v6" stroke="#c0c8d0"/><path d="M8 5l2-2 2 2M8 15l2 2 2-2" fill="none" stroke="#b0bbc5"/>`,
  rulerPen: `<rect x="2" y="1" width="7" height="18" fill="#889aad" stroke="#334"/><path d="M2 4h3M2 8h3M2 12h3M2 16h3" stroke="#223"/><path d="M8 14L17 3l2 2-9 11-3 2z" fill="#223a55"/>`,
  pen: `<path d="M4 18l1-5 9-10 3 3-9 10z" fill="#1f2f44"/><path d="M12 5l3 3" stroke="#7a95b5" stroke-width="2"/>`,
  arrowNote: `<rect x="10" y="2" width="8" height="8" fill="#f0e020" stroke="#111"/><path d="M12 5h4M12 7h4" stroke="#111"/><path d="M8 8c-2 1-2 4-2 6" fill="none" stroke="#111"/><path d="M3 13h6l-3 5z" fill="#111"/>`,
  tasi: `<path d="M18 3v28M4 17h28" stroke="#111" stroke-width="1.300"/><path d="M18 1l-3 6h6zM18 33l-3-6h6zM2 17l6-3v6zM34 17l-6-3v6z" fill="#111"/>`,
  bars: `<path d="M2 17h16" stroke="#111"/><rect x="5" y="9" width="3" height="8" fill="#111"/><rect x="9" y="5" width="3" height="12" fill="#1c64c8"/><rect x="13" y="3" width="4" height="14" fill="#c01818"/><path d="M3 2h3M4 5h2" stroke="#111"/>`,
  beam: `<rect x="4" y="2" width="13" height="3" fill="#223"/><rect x="4" y="14" width="13" height="3" fill="#223"/><rect x="7" y="5" width="7" height="9" fill="#333"/><path d="M2 10h17" stroke="#c01818" stroke-width="1.500"/>`,
  target: `<circle cx="10" cy="10" r="7" fill="none" stroke="#5a6d7f" stroke-dasharray="2 2" stroke-width="2"/><path d="M10 3v14M3 10h14M7 7h6v6H7z" stroke="#d81818" fill="none"/>`,
  lineRed: `<path d="M2 12L9 10" stroke="#111" stroke-width="1.300"/><path d="M9 10h9" stroke="#c01818" stroke-dasharray="2 1"/><path d="M11 3L7 17" stroke="#111"/>`,
  cornerDash: `<path d="M5 18V10c0-4 3-6 6-6h7" stroke="#111" fill="none"/><path d="M3 8l6-5" stroke="#999" stroke-dasharray="1 1"/>`,
  boxNodes: `<rect x="3" y="3" width="14" height="14" fill="#f4f4f4" stroke="#223"/><rect x="2" y="2" width="4" height="4" fill="#456" /><rect x="12" y="12" width="5" height="5" fill="#fff" stroke="#223"/><path d="M6 4h8M4 6v8" stroke="#223"/>`,
  lineSlash: `<path d="M2 8h6" stroke="#111" stroke-width="2"/><path d="M8 8h2" stroke="#c01818" stroke-width="2"/><path d="M16 3l-6 14" stroke="#111"/><path d="M11 8h5" stroke="#111" stroke-dasharray="2 1"/>`,
  curveCorner: `<path d="M5 18v-6c0-6 5-9 12-9" stroke="#111" fill="none" stroke-width="1.200"/><path d="M3 9c1-3 3-5 6-7" stroke="#999" stroke-dasharray="1 1" fill="none"/>`,
  brush: `<path d="M3 14L12 5l4 4-9 9z" fill="#c83030" stroke="#611"/><path d="M3 14l4 4" stroke="#eee"/><path d="M14 2v2M18 3l-2 2M18 7h-2" stroke="#777"/>`,
  ofset: `<path d="M10 28C2 28 1 18 8 16 7 9 14 3 18 3s11 6 10 13c7 2 6 12-2 12z" fill="#fff" stroke="#666" stroke-width="1.200"/><path d="M13 23c-5 0-5-5-1-6 1-1 2-3 2-5 0-3 8-3 8 0 0 2 1 4 2 5 4 1 4 6-1 6z" fill="none" stroke="#a52828" stroke-width="1.300"/>`,
  redCross: `<path d="M2 10h6M12 10h6" stroke="#111" stroke-width="2"/><path d="M10 2v5M10 13v5M4 4l3 3M16 4l-3 3" stroke="#c01818"/>`,
  xCross: `<path d="M2 17L10 8l8 9" fill="none" stroke="#111" stroke-width="1.800"/><path d="M10 2v4M4 4l3 3M16 4l-3 3" stroke="#c01818"/>`,
  cyanCross: `<path d="M1 10h18" stroke="#111"/><path d="M7 7l6 6M13 7l-6 6" stroke="#19b5d8" stroke-width="1.400"/>`,
  // duzenle
  klonla: `<rect x="1" y="7" width="20" height="25" fill="#9fb5cf" stroke="#6d8299"/><rect x="17" y="16" width="13" height="18" fill="none" stroke="#778" stroke-dasharray="2 2"/><path d="M15 4c6-3 9 0 10 7" fill="none" stroke="#334"/><path d="M21 9l8 0-4 6z" fill="#1d3b59"/>`,
  copy: `<path d="M2 1h7l3 3v10H2z" fill="#fff" stroke="#111"/><path d="M4 5h5M4 8h5M4 11h5" stroke="#111"/><path d="M8 6h7l3 3v10H8z" fill="#fff" stroke="#17324f"/><path d="M10 11h6M10 14h6M10 17h6" stroke="#17324f"/>`,
  pasteDim: `<rect x="2" y="3" width="12" height="15" fill="#c0c0c0" stroke="#aaa"/><rect x="5" y="1" width="6" height="4" fill="#aaa"/><rect x="9" y="9" width="9" height="10" fill="#f4f4f4" stroke="#b0b0b0"/><path d="M11 12h5M11 15h5" stroke="#bbb"/>`,
  stackArrow: `<rect x="1" y="2" width="8" height="10" fill="#8ea4bf" stroke="#3f5065"/><rect x="5" y="6" width="8" height="10" fill="#a6b8cf" stroke="#3f5065"/><rect x="9" y="10" width="8" height="9" fill="#8ea4bf" stroke="#3f5065"/><path d="M11 3c4-2 6 0 6 4" fill="none" stroke="#123"/><path d="M15 6h4l-2 3z" fill="#123"/>`,
  rectsArrow: `<rect x="1" y="2" width="7" height="11" fill="#8ea4bf" stroke="#3f5065"/><rect x="7" y="5" width="6" height="9" fill="#a6b8cf" stroke="#3f5065"/><rect x="13" y="2" width="6" height="11" fill="#8ea4bf" stroke="#3f5065"/><path d="M1 15c4 4 10 4 15 2" fill="none" stroke="#123"/><path d="M15 15l4 2-4 2z" fill="#123"/>`,
  dotRing: `<g fill="#666" stroke="#111"><circle cx="10" cy="3" r="1.800"/><circle cx="16" cy="7" r="1.800"/><circle cx="16" cy="14" r="1.800"/><circle cx="10" cy="17" r="1.800"/><circle cx="4" cy="14" r="1.800"/><circle cx="4" cy="7" r="1.800"/></g>`,
  pinkCursor: `<rect x="1" y="2" width="9" height="7" fill="#a57c8c" stroke="#111"/><rect x="5" y="7" width="6" height="5" fill="#b08a98" stroke="#111"/><rect x="11" y="13" width="8" height="6" fill="#445" stroke="#111"/><path d="M9 4l8 8-3 0 2 4-2 1-2-4-2 2z" fill="#fff" stroke="#111"/>`,
  grayCursor: `<rect x="1" y="2" width="9" height="7" fill="#aaa" stroke="#777"/><rect x="5" y="7" width="6" height="5" fill="#bbb" stroke="#777"/><rect x="11" y="13" width="8" height="6" fill="#aaa" stroke="#777"/><path d="M9 4l8 8-3 0 2 4-2 1-2-4-2 2z" fill="#fff" stroke="#111"/>`,
  grayOutline: `<rect x="1" y="2" width="8" height="6" fill="#fff" stroke="#666"/><rect x="5" y="7" width="6" height="5" fill="#fff" stroke="#666"/><rect x="11" y="13" width="8" height="6" fill="#eee" stroke="#666"/><path d="M10 4l6 8h-3l2 4-2 1" fill="#fff" stroke="#111"/>`,
  rotateStack: `<rect x="7" y="1" width="10" height="6" fill="#445" stroke="#111"/><rect x="4" y="6" width="7" height="6" fill="#b08a98" stroke="#111"/><rect x="1" y="10" width="8" height="8" fill="#a57c8c" stroke="#111"/><path d="M17 9v9M15 11l2-2 2 2M15 16l2 2 2-2" fill="none" stroke="#111"/><path d="M11 7l3 3-1 5" fill="none" stroke="#111" stroke-dasharray="1 1"/>`,
  dimRects: `<rect x="1" y="2" width="8" height="6" fill="#c4c4c4" stroke="#a0a0a0"/><rect x="5" y="7" width="6" height="5" fill="#d0d0d0" stroke="#a0a0a0"/><rect x="10" y="12" width="9" height="6" fill="#e4e4e4" stroke="#b4b4b4"/><path d="M15 3v6M12 6h6" stroke="#bbb" stroke-dasharray="1 1"/>`,
  gridCursor: `<path d="M1 5h12M1 9h12M1 13h12M1 17h12M3 3v15M7 3v15M11 3v15" stroke="#b87a7a"/><rect x="4" y="1" width="8" height="7" fill="#445" stroke="#111"/><path d="M11 4l7 8h-3l2 4-2 1-2-4-2 2z" fill="#fff" stroke="#111"/>`,
  eraser: `<path d="M2 13L12 3h6v3L8 16H4z" fill="#c92f2f" stroke="#511"/><path d="M2 13l3 4 3-1-3-4z" fill="#fff" stroke="#333"/><path d="M8 9l5-5M10 10l5-5" stroke="#e88"/>`,
  // yakalama
  cornerArrow: `<path d="M6 15V4M4 7l2-3 3 3M3 15l3-3 9 5" fill="none" stroke="#17324f" stroke-width="1.200"/><path d="M6 15h11M14 12l4 3-4 3" fill="none" stroke="#17324f" stroke-width="1.200"/>`,
  dimGrid: `<path d="M5 3v13h13M2 5l12 12M5 8l8 8M8 3l9 9M3 12l6-8M8 16l8-8" stroke="#c4ccd4" fill="none"/>`,
  cursorArrow: `<path d="M5 17V3M3 5l2-3 2 3M5 16h10" stroke="#17324f" fill="none" stroke-width="1.200"/><path d="M9 6l7 7h-3l1 4-2 1-2-4-2 2z" fill="#17324f"/>`,
  gridLock: `<path d="M1 6h15M1 11h15M1 16h15M4 2v17M9 2v17M14 2v17" stroke="#2a7a3a"/><g fill="#c01818"><circle cx="4" cy="6" r="1"/><circle cx="9" cy="11" r="1"/><circle cx="14" cy="16" r="1"/></g><rect x="10" y="3" width="7" height="6" fill="#19a060" stroke="#111"/><path d="M11.500 3V1.500h4V3" fill="none" stroke="#111"/>`,
  pointLock: `<path d="M3 18L15 6M5 8h12" stroke="#111"/><circle cx="9" cy="12" r="2" fill="#c01818"/><rect x="10" y="3" width="8" height="6" fill="#19a060" stroke="#111"/><path d="M12 3V1h4v2" fill="none" stroke="#111"/>`,
  zigLock: `<path d="M2 3l6 7-6 7M2 3h5M2 17h9l4-8" fill="none" stroke="#111"/><circle cx="2" cy="3" r="1.300" fill="#111"/><circle cx="2" cy="17" r="1.300" fill="#111"/><circle cx="11" cy="17" r="1.300" fill="#111"/><rect x="11" y="3" width="7" height="6" fill="#19a060" stroke="#111"/><path d="M12.500 3V1h4v2" fill="none" stroke="#111"/>`,
  perp: `<path d="M2 16h16M9 4v12" stroke="#111" stroke-width="1.300"/><rect x="9" y="12" width="4" height="4" fill="none" stroke="#111"/>`,
  parallel: `<path d="M2 7h16M2 13h16M14 4l4 3-4 3M14 10l4 3-4 3" fill="none" stroke="#111"/>`,
  lCorner: `<path d="M4 2v15h14" stroke="#111" stroke-width="1.600" fill="none"/><rect x="8" y="11" width="5" height="4" fill="none" stroke="#111"/>`,
  lineCircle: `<path d="M3 17L16 2" stroke="#1c3fc8"/><circle cx="12" cy="11" r="5" fill="none" stroke="#111"/>`,
  dotLine: `<path d="M2 18L10 10" stroke="#111"/><path d="M8 18l2-8-8 2" fill="none" stroke="#111" stroke-width=".7"/><path d="M3 10h15" stroke="#111"/><circle cx="10" cy="10" r="2" fill="#a01818"/>`,
  dotCross: `<path d="M1 9h18M10 9v9M7 14l3 4 3-4" stroke="#111" fill="none"/><circle cx="10" cy="9" r="2" fill="#a01818"/>`,
  // referans
  uzaklik: `<text x="-1" y="27" font-size="25" font-family="Liberation Sans" fill="#111">?</text><path d="M21 2c-5 1-5 4-5 8s0 5-3 7c3 2 3 3 3 7s0 7 5 8" fill="none" stroke="#111" stroke-width="1.500"/><rect x="26" y="0" width="6" height="34" fill="#f0e020" stroke="#111"/><path d="M26 4h3M26 8h3M26 12h3M26 16h3M26 20h3M26 24h3M26 28h3" stroke="#111"/>`,
  m2: `<rect x="2" y="2" width="16" height="16" fill="#eef2f6" stroke="#3a4a5a"/><text x="3.500" y="15" font-size="10" font-family="Liberation Sans" fill="#17324f">m</text><text x="13" y="9" font-size="6" font-family="Liberation Sans" fill="#17324f">2</text>`,
  angle: `<path d="M2 18L16 3v15zM9 18c0-3-2-4-3-4" fill="none" stroke="#3a4a5a"/><text x="10" y="14" font-size="8" font-family="Liberation Sans" fill="#3a4a5a">?</text>`,
  // sol cubuk
  qPanel: `<rect x="1" y="2" width="18" height="15" fill="#eaf0f5" stroke="#667"/><path d="M6 6h10M6 9h10M6 12h10M3 6h1M3 9h1M3 12h1" stroke="#4a7ea8"/><rect x="15" y="3" width="2" height="2" fill="#d33"/>`,
  sideUzak: `<text x="0" y="15" font-size="13" font-family="Liberation Sans" fill="#111">?</text><path d="M12 2c-3 1-2 5-4 7 2 2 1 6 4 8" fill="none" stroke="#111"/><rect x="13" y="1" width="4" height="17" fill="#f0e020" stroke="#111"/>`,
  sideDoc: `<path d="M3 1h12l2 2v15H3z" fill="#fff" stroke="#111" stroke-width="1.300"/><path d="M6 5h7M6 8h7M6 11h5M6 14h7" stroke="#111"/>`,
  sideClone: `<rect x="2" y="3" width="8" height="11" fill="#9fb5cf" stroke="#3f5065"/><rect x="8" y="8" width="9" height="11" fill="#f4f4f4" stroke="#333" stroke-dasharray="1 1"/><path d="M12 2c3 0 4 2 4 4" fill="none" stroke="#123"/><path d="M14 5h4l-2 3z" fill="#123"/>`,
  sideObj: `<rect x="1" y="3" width="8" height="15" fill="#3f5f7f" stroke="#111"/><rect x="10" y="1" width="8" height="10" fill="#ddd" stroke="#556"/><rect x="12" y="4" width="4" height="7" fill="#9a9060"/><circle cx="10" cy="14" r="3.500" fill="#c82838"/><rect x="14" y="14" width="5" height="5" fill="#8a7a20"/>`,
  binoc: `<path d="M3 7L5 2h3v5zM17 7l-2-5h-3v5z" fill="#111"/><path d="M1 17l2-10h6v10zM19 17L17 7h-6v10z" fill="#111"/><rect x="9" y="7" width="2" height="4" fill="#111"/>`,
}
</script>

<style>
html,
body {
  margin: 0;
  padding: 0;
  background: #f0f0f0;
}
</style>

<style scoped>
.app {
  width: 1920px;
  height: 1034px;
  display: flex;
  flex-direction: column;
  overflow: hidden;
  background: #f0f0f0;
  font-family: "Noto Sans", "Open Sans", sans-serif;
  font-size: 11px;
  color: #111;
  position: relative;
}

.titlebar {
  height: 24px;
  background: #fff;
  border-bottom: 1px solid #a2a2a2;
  box-sizing: border-box;
  flex: none;
  position: relative;
}
.logo {
  position: absolute;
  left: 2px;
  top: 2px;
  width: 40px;
  height: 40px;
  border: 1px solid #b8b8b8;
  border-radius: 50%;
  background: #f4f4f4;
  z-index: 3;
  display: flex;
  align-items: center;
  justify-content: center;
  font-family: "Liberation Sans", sans-serif;
}
.logo-ide {
  color: #777;
  font-size: 9px;
}
.logo-cad {
  color: #e0201c;
  font-weight: 700;
  font-size: 10.500px;
  letter-spacing: 0.3px;
}
.quick {
  position: absolute;
  left: 0;
  top: 0;
  height: 23px;
}
.quick-item {
  position: absolute;
  top: 1px;
  width: 22px;
  height: 21px;
  display: flex;
  align-items: center;
  justify-content: center;
  box-sizing: border-box;
}
.quick-item.boxed {
  border: 1px solid #888;
  background: #f4f4f4;
}
.quick-sep {
  position: absolute;
  left: 204px;
  top: 3px;
  height: 18px;
  width: 1px;
  background: #bbb;
}
.ico {
  width: 20px;
  height: 20px;
  display: block;
  flex: none;
}
.title {
  position: absolute;
  left: 936px;
  top: 3px;
  font-family: "Open Sans", sans-serif;
  font-size: 11px;
  font-weight: 600;
  letter-spacing: 0.03px;
  line-height: 16px;
  white-space: nowrap;
  color: #111;
}
.win-buttons {
  position: absolute;
  right: 0;
  top: 0;
  display: flex;
}
.win {
  width: 12px;
  height: 12px;
  margin-top: 5px;
}
.win:nth-child(1) {
  margin-right: 32px;
}
.win:nth-child(2) {
  margin-right: 33px;
}
.win:nth-child(3) {
  margin-right: 19px;
}

.tabbar {
  height: 21px;
  flex: none;
  position: relative;
  background: #f0f0f0;
  display: flex;
  align-items: stretch;
}
.tabs {
  width: 1327px;
  position: relative;
  flex: none;
}
.tab {
  position: absolute;
  top: 3px;
  height: 18px;
  line-height: 18px;
  text-align: center;
  transform: translateX(-50%);
  white-space: nowrap;
}
.tab.active {
  left: 71px;
  width: 48px;
  background: #6fa3dd;
  border-radius: 2px 2px 0 0;
  color: #111;
}
.t-ayar {
  left: 129px;
}
.t-gor {
  left: 197px;
}
.t-ciz {
  left: 269px;
}
.combo {
  position: relative;
  display: flex;
  align-items: center;
  box-sizing: border-box;
  height: 21px;
  flex: none;
}
.combo-a {
  width: 214px;
  border-left: 1px solid #c8c8c8;
  padding-left: 3px;
  background: #f6f6f6;
}
.combo-a .caret {
  position: absolute;
  right: 3px;
  top: 9px;
}
.combo-std .caret {
  position: absolute;
  right: 0;
  top: 9px;
}
.bar-sep {
  width: 1px;
  height: 14px;
  background: #aaa;
  margin: 3px 3px 0 2px;
  flex: none;
}
.bar-sep.s2 {
  margin: 3px 5px 0 4px;
}
.layer2 {
  margin-left: 4px;
}
.bar-line {
  width: 1px;
  height: 21px;
  background: #c4c4c4;
  margin-left: 4px;
  flex: none;
}
.tabbar > .ico {
  align-self: center;
}
.check {
  margin-left: -1px;
  width: 16px;
  height: 16px;
}
.lockw {
  margin-left: -2px;
  width: 16px;
  height: 16px;
}
.combo-std {
  width: 97px;
  margin-left: 4px;
}
.combo-view {
  display: flex;
  align-items: center;
  margin-left: 8px;
  width: 63px;
  flex: none;
  position: relative;
}
.combo-view .caret {
  position: absolute;
  right: 0;
  top: 9px;
}
.person {
  margin-left: 5px;
}
.helpb {
  width: 15px;
  height: 19px;
}
.help-caret {
  margin: 9px 0 0 7px;
  flex: none;
}
.mdi {
  display: flex;
  margin-left: 6px;
  align-items: center;
}
.mdi-b {
  width: 12px;
  height: 12px;
  margin-right: 7px;
}
.caret {
  display: inline-block;
  width: 0;
  height: 0;
  border-left: 3px solid transparent;
  border-right: 3px solid transparent;
  border-top: 3px solid #808080;
}
.caret.dark {
  border-top-color: #111;
}

.ribbon {
  height: 92px;
  flex: none;
  box-sizing: border-box;
  border-top: 1px solid #a8a8a8;
  border-bottom: 2px solid #a2a2a2;
  padding: 1px 0 0 0;
  display: flex;
  background: #f0f0f0;
}
.group {
  height: 86px;
  box-sizing: border-box;
  border: 1px solid #b4b4b4;
  background: #f2f2f2;
  display: flex;
  flex-direction: column;
  flex: none;
}
.group-body {
  height: 70px;
  display: flex;
  flex: none;
  margin-left: -1px;
}
.caption {
  height: 15px;
  line-height: 15px;
  margin: 0 1px;
  background: #c0cedb;
  text-align: center;
  font-size: 11px;
  color: #111;
}
.col-sep {
  width: 1px;
  height: 60px;
  margin-top: 7px;
  background: #bdbdbd;
  flex: none;
}
.col-small {
  width: 20px;
  height: 66px;
  margin-top: 2px;
  display: flex;
  flex-direction: column;
  justify-content: space-between;
  flex: none;
}
.small-item {
  width: 20px;
  height: 20px;
  display: flex;
  align-items: center;
  flex: none;
  position: relative;
}
.small-item.boxed::before {
  content: "";
  position: absolute;
  inset: -3px -3px;
  border: 1px solid #bbb;
  background: #fafafa;
}
.small-item .ico {
  position: relative;
}
.caret.side {
  margin-left: 3px;
  flex: none;
}
.col-big {
  flex: none;
  display: flex;
  flex-direction: column;
  align-items: center;
  padding-top: 5px;
  box-sizing: border-box;
  height: 70px;
}
.ico-big {
  width: 36px;
  height: 34px;
  display: block;
  flex: none;
  margin-bottom: 1px;
}
.big-label {
  line-height: 13px;
  white-space: nowrap;
  color: #111;
}
.dim .big-label {
  color: #888;
}
.caret.inline {
  margin-left: 2px;
  vertical-align: 2px;
  border-top-color: #111;
}
.dim .caret.inline {
  border-top-color: #808080;
}
.caret.under {
  margin-top: 5px;
}
.col-big:not(.dim) .caret.under {
  border-top-color: #111;
}

.work {
  height: 811px;
  flex: none;
  display: flex;
}
.sidebar {
  width: 28px;
  flex: none;
  box-sizing: border-box;
  border-right: 1px solid #fff;
  position: relative;
}
.sidebar::after {
  content: "";
  position: absolute;
  left: 26px;
  top: 0;
  bottom: 0;
  width: 1px;
  background: #b4b4b4;
}
.side-tools {
  width: 26px;
  height: 425px;
  box-sizing: border-box;
  border-bottom: 2px solid #b0b0b0;
  background: #f5f5f5;
  padding-top: 4px;
  display: flex;
  flex-direction: column;
  align-items: center;
  position: relative;
}
.side-ico {
  flex: none;
  margin-bottom: 1px;
}
.side-sep {
  width: 21px;
  height: 1px;
  background: #b4b4b4;
  margin: 3px 0 4px;
  flex: none;
}
.side-sep.first {
  margin: 0 0 5px;
}
.side-arrow {
  position: absolute;
  left: 10px;
  top: 413px;
  width: 0;
  height: 0;
  border-top: 3px solid transparent;
  border-bottom: 3px solid transparent;
  border-right: 3px solid #111;
}
.viewports {
  flex: 1;
  display: flex;
  padding-top: 3px;
  gap: 4px;
  box-sizing: border-box;
  background: #fff;
  height: 811px;
  padding-bottom: 1px;
}
.view {
  position: relative;
  height: 807px;
  flex: none;
}
.plan {
  width: 947px;
  background: #595959;
}
.persp {
  width: 941px;
  background: linear-gradient(180deg, #858585 0%, #3f3f3f 50%, #000 100%);
}
.canvas {
  width: 100%;
  height: 100%;
  display: block;
}
.axis-text {
  font-family: "Liberation Sans", sans-serif;
  font-size: 15.500px;
  fill: #ffff20;
  text-anchor: middle;
}
.mini-text {
  font-family: "Liberation Sans", sans-serif;
  font-size: 7px;
  font-weight: 700;
  fill: #333;
  text-anchor: middle;
}
.persp-label {
  position: absolute;
  left: 5px;
  top: 3px;
  color: #f00000;
  font-size: 12px;
  line-height: 16px;
}
.vbtn {
  width: 17px;
  height: 15px;
  padding: 0;
  margin: 0;
  border: 1px solid #333;
  border-top-color: #eee;
  border-left-color: #eee;
  background: #d6d6d6;
  display: block;
  box-sizing: border-box;
}
.vbtn svg {
  display: block;
  width: 100%;
  height: 100%;
}
.vbtn.one {
  position: absolute;
  right: 0;
  top: 1px;
}
.vbtn-row {
  position: absolute;
  right: 3px;
  top: 1px;
  display: flex;
  gap: 1px;
}

.messages {
  height: 67px;
  flex: none;
  box-sizing: border-box;
  padding: 17px 0 0 26px;
  line-height: 13px;
  font-size: 11px;
}
.status {
  height: 19px;
  flex: none;
  position: relative;
  display: flex;
  box-sizing: border-box;
  padding-left: 30px;
  gap: 3px;
  border-bottom: 2px solid #dfe8ef;
}
.cell {
  box-sizing: border-box;
  height: 17px;
  border-top: 1px solid #a2a2a2;
  border-left: 1px solid #a2a2a2;
  padding-left: 2px;
  line-height: 14px;
  font-size: 11px;
  flex: none;
}
.c1 {
  width: 253px;
}
.c2 {
  width: 1405px;
}
.c3 {
  width: 73px;
}
.c4 {
  width: 73px;
  padding-left: 5px;
}
.c5 {
  width: 73px;
  padding-left: 5px;
}
</style>
